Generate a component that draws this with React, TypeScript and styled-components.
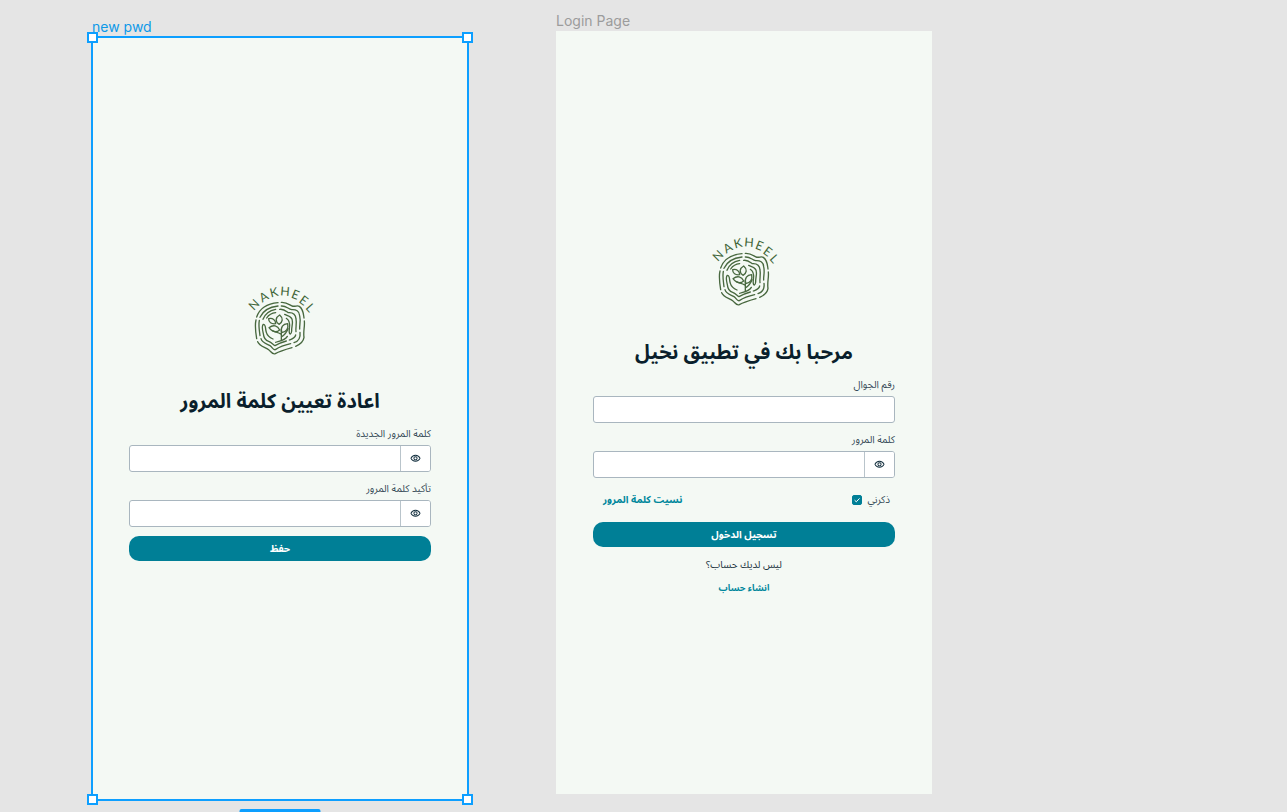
import React, { useId, useState } from "react";
import styled, { createGlobalStyle } from "styled-components";
import { MdOutlineVisibility } from "react-icons/md";

const GlobalStyle = createGlobalStyle`
  *, *::before, *::after { box-sizing: border-box; }
  body {
    margin: 0;
    background: #e5e5e5;
    font-family: "Noto Sans Arabic", "Noto Sans", "DejaVu Sans", sans-serif;
  }
`;

const Canvas = styled.main`
  display: flex;
  align-items: flex-start;
  gap: 88px;
  height: 100vh;
  padding: 11px 92px 0;
  overflow: hidden;
`;

const Artboard = styled.section<{ $drop?: boolean }>`
  flex: none;
  width: 376px;
  margin-top: ${(p) => (p.$drop ? 6 : 0)}px;
`;

const ArtboardName = styled.h2<{ $active?: boolean }>`
  margin: 0;
  height: 20px;
  font: 400 14px/20px Inter, sans-serif;
  color: ${(p) => (p.$active ? "#0d99e8" : "#9c9c9c")};
`;

const Screen = styled.div<{ $active?: boolean }>`
  position: relative;
  display: flex;
  flex-direction: column;
  justify-content: center;
  min-height: 763px;
  padding: 0 37px;
  background: #f4f9f4;
  outline: ${(p) => (p.$active ? "2px solid #0d9fff" : "none")};
  outline-offset: -1px;
`;

const Handle = styled.span<{ $v: "top" | "bottom"; $h: "left" | "right" }>`
  position: absolute;
  ${(p) => p.$v}: -5px;
  ${(p) => p.$h}: -5px;
  width: 11px;
  height: 11px;
  border: 2px solid #0d9fff;
  background: #fff;
`;

const SizeBadge = styled.span`
  position: absolute;
  top: calc(100% + 9px);
  left: 50%;
  width: 81px;
  height: 20px;
  transform: translateX(-50%);
  border-radius: 2px;
  background: #0d9fff;
`;

const Form = styled.form`
  display: flex;
  flex-direction: column;
`;

const LogoArt = styled.svg`
  display: block;
  align-self: center;
  width: 90px;
  height: 90px;
`;

const Title = styled.h1`
  margin: 20px 0 8px;
  font-size: 20px;
  line-height: 32px;
  font-weight: 700;
  text-align: center;
  color: #0a1f2c;
`;

const FieldBlock = styled.div`
  display: flex;
  flex-direction: column;
  gap: 3px;
  margin-bottom: 9px;
`;

const FieldLabel = styled.label`
  font-size: 10px;
  line-height: 16px;
  color: #344957;
`;

const InputBox = styled.div`
  display: flex;
  height: 27px;
  border: 1px solid #a9b6bf;
  border-radius: 3px;
  background: #fff;
  overflow: hidden;
`;

const TextInput = styled.input`
  flex: 1;
  min-width: 0;
  padding: 0 8px;
  border: 0;
  outline: 0;
  background: transparent;
  font: inherit;
  font-size: 12px;
`;

const RevealButton = styled.button`
  display: grid;
  place-items: center;
  width: 30px;
  padding: 0;
  border: 0;
  border-left: 1px solid #b9c4cb;
  background: #fff;
  color: #14303f;
`;

const SubmitButton = styled.button`
  height: 25px;
  padding: 0;
  border: 0;
  border-radius: 10px;
  background: #007f96;
  color: #fff;
  font: inherit;
  font-size: 10px;
  line-height: 16px;
  font-weight: 700;
`;

const OptionsRow = styled.div`
  display: flex;
  align-items: center;
  justify-content: space-between;
  height: 16px;
  margin: 5px 5px 14px 10px;
`;

const Remember = styled.label`
  display: flex;
  align-items: center;
  gap: 5px;
  font-size: 10px;
  line-height: 16px;
  color: #344957;
`;

const CheckWrap = styled.span`
  display: grid;
  width: 10px;
  height: 10px;

  > * { grid-area: 1 / 1; }
`;

const CheckInput = styled.input`
  appearance: none;
  width: 10px;
  height: 10px;
  margin: 0;
  border: 1px solid #007f96;
  border-radius: 2px;

  &:checked { background: #007f96; }
`;

const Tick = styled.svg`
  width: 10px;
  height: 10px;
  pointer-events: none;
`;

const TextLink = styled.a<{ $small?: boolean }>`
  font-size: ${(p) => (p.$small ? 9 : 10)}px;
  line-height: 16px;
  font-weight: 700;
  text-decoration: none;
  color: #00879c;
`;

const SignUp = styled.div`
  display: flex;
  flex-direction: column;
  align-items: center;
  gap: 8px;
  padding: 10px 0 1px;
`;

const Prompt = styled.p`
  margin: 0;
  font-size: 10px;
  line-height: 16px;
  color: #22343f;
`;

const logoLetters: [string, number, number, number][] = [
  ["N", 54, 90, -45],
  ["A", 83, 67, -30],
  ["K", 114, 53, -14],
  ["H", 147, 50, 5],
  ["E", 178, 60, 22],
  ["E", 203, 77, 37],
  ["L", 223, 99, 48],
];

function Logo() {
  return (
    <LogoArt viewBox="0 0 270 270" role="img" aria-label="Nakheel">
      <g transform="translate(3 -4)">
        <g
          fill="#3f6538"
          fontFamily="Lato, sans-serif"
          fontSize="37"
          textAnchor="middle"
        >
          {logoLetters.map(([letter, x, y, angle], i) => (
            <text key={i} transform={`translate(${x} ${y}) rotate(${angle})`} y="13">
              {letter}
            </text>
          ))}
        </g>
        <g fill="none" stroke="#48683f" strokeWidth="4" strokeLinecap="round" strokeLinejoin="round">
          <path d="M62 127C70 104 92 87 126 84M136 83C151 82 159 89 168 94C178 97 183 91 190 95C202 103 202 116 204 130M205 139C207 155 201 171 204 188C202 204 190 210 179 215M168 219C150 224 132 229 118 237C110 241 105 231 99 226C88 218 70 214 65 201M62 192C59 174 56 153 60 136" />
          <path d="M72 128C80 110 98 97 126 94M136 94C150 93 156 102 167 105C180 104 190 109 191 123C195 140 190 151 191 163M192 173C194 189 187 200 174 204M164 207C146 211 130 217 118 225C111 227 109 217 102 213C91 207 78 205 75 192M72 183C70 167 67 152 70 137" />
          <path d="M81 134C87 118 101 107 119 104M131 104C143 102 150 109 157 114C171 113 179 120 180 133C183 148 178 160 180 171M179 181C177 191 167 193 160 196M151 199C140 202 127 207 117 213C111 209 106 203 98 200C87 197 83 188 82 177C79 164 76 154 82 149C91 149 87 163 91 173C94 184 102 189 111 193" />
          <path d="M92 130C98 121 107 115 119 114M146 119C157 125 168 124 169 138C171 148 166 158 167 169C166 180 161 180 160 174C158 163 163 154 160 144C159 138 155 134 151 131M119 203C132 199 147 197 154 185" />
          <path d="M136 197V164M134 178C125 172 117 173 109 168M136 187C146 180 152 174 156 162" />
          <path d="M129 149C116 139 119 128 131 121C143 131 140 142 129 149Z" />
          <path d="M119 147C106 149 98 143 98 132C110 129 119 136 119 147Z" />
          <path d="M131 166C120 175 108 170 99 159C112 149 125 153 131 166Z" />
          <path d="M137 174C133 157 141 148 155 147C158 161 152 171 137 174Z" />
        </g>
      </g>
    </LogoArt>
  );
}

function Field({ label, secret }: { label: string; secret?: boolean }) {
  const id = useId();
  const [shown, setShown] = useState(false);
  return (
    <FieldBlock>
      <FieldLabel htmlFor={id} dir="rtl">{label}</FieldLabel>
      <InputBox>
        <TextInput id={id} dir="rtl" type={secret && !shown ? "password" : "text"} />
        {secret && (
          <RevealButton type="button" aria-label="إظهار كلمة المرور" onClick={() => setShown(!shown)}>
            <MdOutlineVisibility size={11} />
          </RevealButton>
        )}
      </InputBox>
    </FieldBlock>
  );
}

export default function App() {
  const [remember, setRemember] = useState(true);
  const stay = (e: React.FormEvent) => e.preventDefault();

  return (
    <>
      <GlobalStyle />
      <Canvas>
        <Artboard $drop>
          <ArtboardName $active>new pwd</ArtboardName>
          <Screen $active>
            <Form onSubmit={stay}>
              <Logo />
              <Title dir="rtl">اعادة تعيين كلمة المرور</Title>
              <Field label="كلمة المرور الجديدة" secret />
              <Field label="تأكيد كلمة المرور" secret />
              <SubmitButton>حفظ</SubmitButton>
            </Form>
            <Handle $v="top" $h="left" />
            <Handle $v="top" $h="right" />
            <Handle $v="bottom" $h="left" />
            <Handle $v="bottom" $h="right" />
            <SizeBadge />
          </Screen>
        </Artboard>

        <Artboard>
          <ArtboardName>Login Page</ArtboardName>
          <Screen>
            <Form onSubmit={stay}>
              <Logo />
              <Title dir="rtl">مرحبا بك في تطبيق نخيل</Title>
              <Field label="رقم الجوال" />
              <Field label="كلمة المرور" secret />
              <OptionsRow>
                <TextLink href="#forgot" dir="rtl">نسيت كلمة المرور</TextLink>
                <Remember>
                  <CheckWrap>
                    <CheckInput
                      type="checkbox"
                      checked={remember}
                      onChange={(e) => setRemember(e.target.checked)}
                    />
                    {remember && (
                      <Tick viewBox="0 0 10 10" fill="none" stroke="#fff" aria-hidden="true">
                        <path d="M2.6 5.2 4.3 6.8 7.5 3.4" />
                      </Tick>
                    )}
                  </CheckWrap>
                  ذكرني
                </Remember>
              </OptionsRow>
              <SubmitButton>تسجيل الدخول</SubmitButton>
              <SignUp>
                <Prompt dir="rtl">ليس لديك حساب؟</Prompt>
                <TextLink $small href="#signup">انشاء حساب</TextLink>
              </SignUp>
            </Form>
          </Screen>
        </Artboard>
      </Canvas>
    </>
  );
}
